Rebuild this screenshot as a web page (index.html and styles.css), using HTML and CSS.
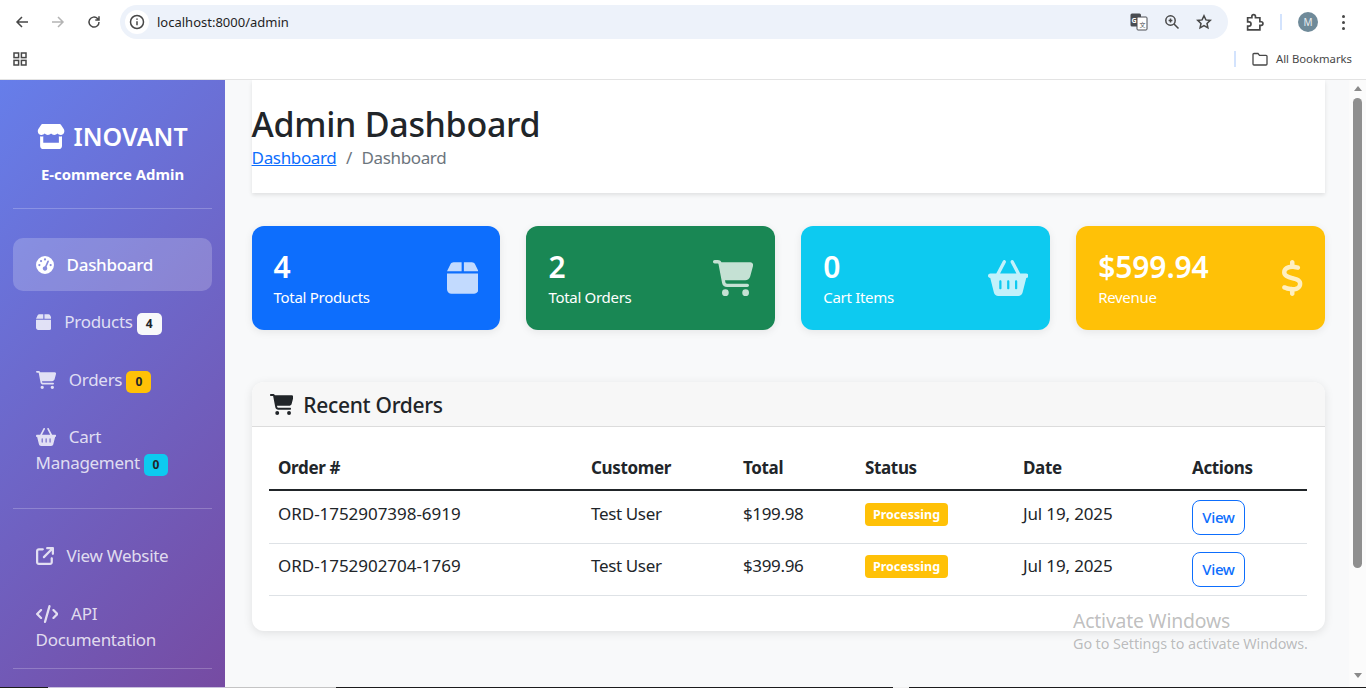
FILE: index.html
```html
<!DOCTYPE html>
<html lang="en">
<head>
    <meta charset="UTF-8">
    <meta name="viewport" content="width=device-width, initial-scale=1.0">
    <title>Admin Dashboard</title>
    <link rel="stylesheet" href="styles.css">
</head>
<body>
    <svg class="sprite" xmlns="http://www.w3.org/2000/svg">
        <symbol id="i-store" viewBox="0 0 576 512"><path d="M547.6 103.8L490.3 13.1C485.2 5 476.1 0 466.4 0H109.6C99.9 0 90.8 5 85.7 13.1L28.3 103.8c-29.6 46.8-3.4 111.9 51.9 119.4c4 .5 8.1 .8 12.1 .8c26.1 0 49.3-11.4 65.2-29c15.9 17.6 39.1 29 65.2 29c26.1 0 49.3-11.4 65.2-29c15.9 17.6 39.1 29 65.2 29c26.2 0 49.3-11.4 65.2-29c16 17.6 39.1 29 65.2 29c4.1 0 8.1-.3 12.1-.8c55.5-7.4 81.8-72.5 52.1-119.4zM499.7 254.9l-.1 0c-5.3 .7-10.7 1.1-16.2 1.1c-12.4 0-24.3-1.9-35.4-5.3V384H128V250.6c-11.2 3.5-23.2 5.4-35.6 5.4c-5.5 0-11-.4-16.3-1.1l-.1 0c-4.1-.6-8.1-1.3-12-2.3V384v64c0 35.3 28.7 64 64 64H448c35.3 0 64-28.7 64-64V384 252.6c-4 1-8 1.8-12.3 2.3z"/></symbol>
        <symbol id="i-gauge" viewBox="0 0 512 512"><path d="M0 256a256 256 0 1 1 512 0A256 256 0 1 1 0 256zM288 96a32 32 0 1 0 -64 0 32 32 0 1 0 64 0zM256 416c35.3 0 64-28.7 64-64c0-17.4-6.9-33.1-18.1-44.6L366 161.7c5.3-12.1-.2-26.3-12.3-31.6s-26.3 .2-31.6 12.3L257.9 288c-.6 0-1.3 0-1.9 0c-35.3 0-64 28.7-64 64s28.7 64 64 64zM176 144a32 32 0 1 0 -64 0 32 32 0 1 0 64 0zM96 288a32 32 0 1 0 0-64 32 32 0 1 0 0 64zm352-32a32 32 0 1 0 -64 0 32 32 0 1 0 64 0z"/></symbol>
        <symbol id="i-box" viewBox="0 0 448 512"><path d="M50.7 58.5L0 160H208V32H93.7C75.5 32 58.9 42.3 50.7 58.5zM240 160H448L397.3 58.5C389.1 42.3 372.5 32 354.3 32H240V160zm208 32H0V416c0 35.3 28.7 64 64 64H384c35.3 0 64-28.7 64-64V192z"/></symbol>
        <symbol id="i-cart" viewBox="0 0 576 512"><path d="M0 24C0 10.7 10.7 0 24 0H69.5c22 0 41.5 12.8 50.6 32h411c26.3 0 45.5 25 38.6 50.4l-41 152.3c-8.5 31.4-37 53.3-69.5 53.3H170.7l5.4 28.5c2.2 11.3 12.1 19.5 23.6 19.5H488c13.3 0 24 10.7 24 24s-10.7 24-24 24H199.7c-34.6 0-64.3-24.6-70.7-58.5L77.4 54.5c-.7-3.8-4-6.5-7.9-6.5H24C10.7 48 0 37.3 0 24zM128 464a48 48 0 1 1 96 0 48 48 0 1 1 -96 0zm336-48a48 48 0 1 1 0 96 48 48 0 1 1 0-96z"/></symbol>
        <symbol id="i-basket" viewBox="0 0 576 512"><path d="M253.3 35.1c6.1-11.8 1.5-26.3-10.2-32.4s-26.3-1.5-32.4 10.2L117.6 192H32c-17.7 0-32 14.3-32 32s14.3 32 32 32L83.9 463.5C91 492 116.6 512 146 512H430c29.4 0 55-20 62.1-48.5L544 256c17.7 0 32-14.3 32-32s-14.3-32-32-32H458.4L365.3 12.9C359.2 1.2 344.7-3.4 332.9 2.7s-16.3 20.6-10.2 32.4L404.3 192H171.7L253.3 35.1zM192 304v96c0 8.8-7.2 16-16 16s-16-7.2-16-16V304c0-8.8 7.2-16 16-16s16 7.2 16 16zm96-16c8.8 0 16 7.2 16 16v96c0 8.8-7.2 16-16 16s-16-7.2-16-16V304c0-8.8 7.2-16 16-16zm128 16v96c0 8.8-7.2 16-16 16s-16-7.2-16-16V304c0-8.8 7.2-16 16-16s16 7.2 16 16z"/></symbol>
        <symbol id="i-dollar" viewBox="0 0 320 512"><path d="M160 0c17.7 0 32 14.3 32 32V67.7c1.6 .2 3.1 .4 4.7 .7c.4 .1 .7 .1 1.1 .2l48 8.8c17.4 3.2 28.9 19.9 25.7 37.2s-19.9 28.9-37.2 25.7l-47.5-8.7c-31.3-4.6-58.9-1.5-78.3 6.2s-27.2 18.3-29 28.1c-2 10.7-.5 16.7 1.2 20.4c1.8 3.9 5.5 8.3 12.8 13.2c16.3 10.7 41.3 17.7 73.7 26.3l2.9 .8c28.6 7.6 63.6 16.8 89.6 33.8c14.2 9.3 27.6 21.9 35.9 39.5c8.5 17.9 10.3 37.9 6.4 59.2c-6.9 38-33.1 63.4-65.6 76.7c-13.7 5.6-28.6 9.2-44.4 11V480c0 17.7-14.3 32-32 32s-32-14.3-32-32V445.1c-.4-.1-.9-.1-1.3-.2l-.2 0 0 0c-24.4-3.8-64.5-14.3-91.5-26.3c-16.1-7.2-23.4-26.1-16.2-42.2s26.1-23.4 42.2-16.2c20.9 9.3 55.3 18.5 75.2 21.6c31.9 4.7 58.2 2 76-5.3c16.9-6.9 24.6-16.9 26.8-28.9c1.9-10.6 .4-16.7-1.3-20.4c-1.9-4-5.6-8.4-13-13.3c-16.4-10.7-41.5-17.7-74-26.3l-2.8-.7 0 0C119.4 279.3 84.4 270 58.4 253c-14.2-9.3-27.5-22-35.8-39.6c-8.4-17.9-10.1-37.9-6.1-59.2C23.7 116 52.3 91.2 84.8 78.3c13.3-5.3 27.9-8.9 43.2-11V32c0-17.7 14.3-32 32-32z"/></symbol>
        <symbol id="i-external" viewBox="0 0 512 512"><path d="M320 0c-17.7 0-32 14.3-32 32s14.3 32 32 32h82.7L201.4 265.4c-12.5 12.5-12.5 32.8 0 45.3s32.8 12.5 45.3 0L448 109.3V192c0 17.7 14.3 32 32 32s32-14.3 32-32V32c0-17.7-14.3-32-32-32H320zM80 32C35.8 32 0 67.8 0 112V432c0 44.2 35.8 80 80 80H400c44.2 0 80-35.8 80-80V320c0-17.7-14.3-32-32-32s-32 14.3-32 32V432c0 8.8-7.2 16-16 16H80c-8.8 0-16-7.2-16-16V112c0-8.8 7.2-16 16-16H192c17.7 0 32-14.3 32-32s-14.3-32-32-32H80z"/></symbol>
        <symbol id="i-code" viewBox="0 0 640 512"><path d="M392.8 1.2c-17-4.9-34.7 5-39.6 22l-128 448c-4.9 17 5 34.7 22 39.6s34.7-5 39.6-22l128-448c4.9-17-5-34.7-22-39.6zm80.6 120.1c-12.5 12.5-12.5 32.8 0 45.3L562.7 256l-89.4 89.4c-12.5 12.5-12.5 32.8 0 45.3s32.8 12.5 45.3 0l112-112c12.5-12.5 12.5-32.8 0-45.3l-112-112c-12.5-12.5-32.8-12.5-45.3 0zm-306.7 0c-12.5-12.5-32.8-12.5-45.3 0l-112 112c-12.5 12.5-12.5 32.8 0 45.3l112 112c12.5 12.5 32.8 12.5 45.3 0s12.5-32.8 0-45.3L77.3 256l89.4-89.4c12.5-12.5 12.5-32.8 0-45.3z"/></symbol>
    </svg>

    <div class="browser-top">
        <div class="toolbar">
            <button class="tool-btn">
                <svg viewBox="0 0 16 16" class="tool-icon"><path d="M14 8H3M8 3L3 8l5 5"/></svg>
            </button>
            <button class="tool-btn tool-btn-off">
                <svg viewBox="0 0 16 16" class="tool-icon"><path d="M2 8h11M8 3l5 5-5 5"/></svg>
            </button>
            <button class="tool-btn">
                <svg viewBox="0 0 16 16" class="tool-icon"><path d="M13 8a5 5 0 1 1-1.5-3.5L13 6M13 2.2V6H9.3"/></svg>
            </button>
            <div class="address-bar">
                <span class="site-info">
                    <svg viewBox="0 0 16 16" class="tool-icon"><circle cx="8" cy="8" r="6.5"/><path d="M8 7.2v4M8 4.6v1.2"/></svg>
                </span>
                <span class="address-text">localhost:8000/admin</span>
                <span class="address-actions">
                    <svg viewBox="0 0 18 18" class="translate-icon">
                        <rect x="0.5" y="0.5" width="10.5" height="13" rx="1.5" fill="#4a4d52"/>
                        <rect x="7" y="4" width="10" height="13" rx="1" fill="#fff" stroke="#4a4d52"/>
                        <text x="1.5" y="9.5" class="translate-g">G</text>
                        <text x="9.4" y="13.5" class="translate-x">文</text>
                    </svg>
                    <svg viewBox="0 0 16 16" class="tool-icon"><circle cx="6.5" cy="6.5" r="4.7"/><path d="M10 10l4.5 4.5M4.6 6.5h3.8M6.5 4.6v3.8"/></svg>
                    <svg viewBox="0 0 16 16" class="tool-icon"><path d="M8 1.8l1.9 4.1 4.4.5-3.3 3 .9 4.4L8 11.6l-3.9 2.2.9-4.4-3.3-3 4.4-.5z"/></svg>
                </span>
            </div>
            <button class="tool-btn tool-btn-ext">
                <svg viewBox="0 0 18 18" class="ext-icon"><path d="M2.5 4.5h4V3.2a1.7 1.7 0 0 1 3.4 0v1.3h4.2v3.8h1.2a1.7 1.7 0 0 1 0 3.4h-1.2v4.3H2.5v-3.6h1.2a2 2 0 0 0 0-4H2.500z"/></svg>
            </button>
            <span class="toolbar-sep"></span>
            <span class="avatar">M</span>
            <span class="kebab"><i></i><i></i><i></i></span>
        </div>
        <div class="bookmarks">
            <svg viewBox="0 0 14 14" class="apps-icon">
                <rect x="1" y="1" width="4.6" height="4.6"/><rect x="8.4" y="1" width="4.6" height="4.6"/>
                <rect x="1" y="8.4" width="4.6" height="4.6"/><rect x="8.4" y="8.4" width="4.6" height="4.6"/>
            </svg>
            <span class="bookmarks-right">
                <span class="bookmarks-sep"></span>
                <svg viewBox="0 0 16 14" class="folder-icon"><path d="M1 2.5a1 1 0 0 1 1-1h4l1.500 1.800H14a1 1 0 0 1 1 1V12a1 1 0 0 1-1 1H2a1 1 0 0 1-1-1z"/></svg>
                <span class="bookmarks-label">All Bookmarks</span>
            </span>
        </div>
    </div>

    <div class="viewport">
        <aside class="sidebar">
            <div class="brand">
                <h3 class="brand-name"><svg class="icon" viewBox="0 0 576 512"><use href="#i-store"/></svg>INOVANT</h3>
                <div class="brand-sub">E-commerce Admin</div>
            </div>
            <hr class="side-line side-line-top">
            <ul class="side-nav">
                <li><a class="side-link active" href="#"><svg class="icon" viewBox="0 0 512 512"><use href="#i-gauge"/></svg>Dashboard</a></li>
                <li><a class="side-link" href="#"><svg class="icon" viewBox="0 0 448 512"><use href="#i-box"/></svg>Products <span class="count count-light">4</span></a></li>
                <li><a class="side-link" href="#"><svg class="icon" viewBox="0 0 576 512"><use href="#i-cart"/></svg>Orders <span class="count count-warn">0</span></a></li>
                <li><a class="side-link" href="#"><svg class="icon" viewBox="0 0 576 512"><use href="#i-basket"/></svg>Cart Management <span class="count count-info">0</span></a></li>
            </ul>
            <hr class="side-line side-line-mid">
            <ul class="side-nav">
                <li><a class="side-link" href="#"><svg class="icon" viewBox="0 0 512 512"><use href="#i-external"/></svg>View Website</a></li>
                <li><a class="side-link" href="#"><svg class="icon" viewBox="0 0 640 512"><use href="#i-code"/></svg>API Documentation</a></li>
            </ul>
            <hr class="side-line side-line-end">
        </aside>

        <main class="main">
            <header class="page-header">
                <h1>Admin Dashboard</h1>
                <nav class="crumbs"><a href="#">Dashboard</a><span class="crumb-sep">/</span><span class="crumb-now">Dashboard</span></nav>
            </header>

            <section class="stats">
                <div class="stat stat-blue">
                    <div class="stat-text"><div class="stat-num">4</div><div class="stat-label">Total Products</div></div>
                    <svg class="stat-icon" viewBox="0 0 448 512"><use href="#i-box"/></svg>
                </div>
                <div class="stat stat-green">
                    <div class="stat-text"><div class="stat-num">2</div><div class="stat-label">Total Orders</div></div>
                    <svg class="stat-icon" viewBox="0 0 576 512"><use href="#i-cart"/></svg>
                </div>
                <div class="stat stat-cyan">
                    <div class="stat-text"><div class="stat-num">0</div><div class="stat-label">Cart Items</div></div>
                    <svg class="stat-icon" viewBox="0 0 576 512"><use href="#i-basket"/></svg>
                </div>
                <div class="stat stat-yellow">
                    <div class="stat-text"><div class="stat-num">$599.94</div><div class="stat-label">Revenue</div></div>
                    <svg class="stat-icon" viewBox="0 0 320 512"><use href="#i-dollar"/></svg>
                </div>
            </section>

            <section class="card">
                <div class="card-head">
                    <svg class="card-icon" viewBox="0 0 576 512"><use href="#i-cart"/></svg>
                    <h5>Recent Orders</h5>
                </div>
                <div class="card-body">
                    <table class="orders">
                        <thead>
                            <tr>
                                <th class="col-id">Order #</th>
                                <th class="col-customer">Customer</th>
                                <th class="col-total">Total</th>
                                <th class="col-status">Status</th>
                                <th class="col-date">Date</th>
                                <th>Actions</th>
                            </tr>
                        </thead>
                        <tbody>
                            <tr>
                                <td class="order-id">ORD-1752907398-6919</td>
                                <td>Test User</td>
                                <td>$199.98</td>
                                <td><span class="status">Processing</span></td>
                                <td class="order-date">Jul 19, 2025</td>
                                <td><a class="view-btn" href="#">View</a></td>
                            </tr>
                            <tr>
                                <td class="order-id">ORD-1752902704-1769</td>
                                <td>Test User</td>
                                <td>$399.96</td>
                                <td><span class="status">Processing</span></td>
                                <td class="order-date">Jul 19, 2025</td>
                                <td><a class="view-btn" href="#">View</a></td>
                            </tr>
                        </tbody>
                    </table>
                </div>
            </section>
        </main>

        <div class="scrollbar">
            <span class="arrow-up"></span>
            <span class="thumb"></span>
            <span class="arrow-down"></span>
        </div>

        <div class="watermark">
            <div class="watermark-title">Activate Windows</div>
            <div class="watermark-sub">Go to Settings to activate Windows.</div>
        </div>
    </div>

    <div class="taskbar-edge">
        <span class="edge-dark edge-a"></span>
        <span class="edge-lilac"></span>
        <span class="edge-grey"></span>
        <span class="edge-dark edge-b"></span>
        <span class="edge-white"></span>
        <span class="edge-dark edge-c"></span>
    </div>
</body>
</html>
```

FILE: styles.css
```css
* {
    box-sizing: border-box;
}

html, body {
    height: 100%;
}

body {
    margin: 0;
    display: flex;
    flex-direction: column;
    overflow: hidden;
    font-family: "Noto Sans", "Open Sans", sans-serif;
    color: #212529;
    background-color: #f8f9fa;
}

.sprite {
    display: none;
}

/* browser toolbar */
.browser-top {
    height: 80px;
    flex: none;
    background-color: #fff;
    border-bottom: 1px solid #e3e3e3;
}

.toolbar {
    height: 44px;
    display: flex;
    align-items: center;
    padding-left: 4px;
}

.tool-btn {
    width: 36px;
    height: 34px;
    display: flex;
    align-items: center;
    justify-content: center;
    background: none;
    border: none;
    padding: 0;
    color: #474747;
}

.tool-btn-off {
    color: #b4b4b4;
}

.tool-btn-ext {
    margin-left: 8px;
}

.tool-icon {
    width: 16px;
    height: 16px;
    fill: none;
    stroke: currentColor;
    stroke-width: 1.5;
}

.ext-icon {
    width: 19px;
    height: 19px;
    fill: none;
    stroke: currentColor;
    stroke-width: 1.6;
}

.address-bar {
    width: 1108px;
    height: 34px;
    margin-left: 8px;
    display: flex;
    align-items: center;
    padding-left: 5px;
    border-radius: 17px;
    background-color: #edf2fa;
    color: #474747;
}

.site-info {
    width: 24px;
    height: 24px;
    display: flex;
    align-items: center;
    justify-content: center;
    border-radius: 50%;
    background-color: #fff;
}

.address-text {
    margin-left: 8px;
    font-size: 13px;
    color: #1f1f1f;
}

.address-actions {
    margin-left: auto;
    padding-right: 16px;
    display: flex;
    align-items: center;
    gap: 16px;
}

.translate-icon {
    width: 18px;
    height: 18px;
}

.translate-g {
    font-size: 7px;
    font-weight: 700;
    fill: #fff;
}

.translate-x {
    font-family: "Noto Sans CJK SC", sans-serif;
    font-size: 6px;
    fill: #4a4d52;
}

.toolbar-sep {
    width: 2px;
    height: 16px;
    margin-left: 8px;
    background-color: #d3e3fd;
}

.avatar {
    width: 20px;
    height: 20px;
    margin-left: 16px;
    display: flex;
    align-items: center;
    justify-content: center;
    border-radius: 50%;
    background-color: #6f8a99;
    color: #e8eef2;
    font-size: 10px;
}

.kebab {
    margin-left: 24px;
    display: flex;
    flex-direction: column;
    gap: 3px;
}

.kebab i {
    width: 3px;
    height: 3px;
    border-radius: 50%;
    background-color: #474747;
}

.bookmarks {
    height: 30px;
    display: flex;
    align-items: center;
    padding-left: 13px;
}

.apps-icon {
    width: 14px;
    height: 14px;
    fill: none;
    stroke: #474747;
    stroke-width: 1.5;
}

.bookmarks-right {
    margin-left: auto;
    display: flex;
    align-items: center;
    padding-right: 14px;
}

.bookmarks-sep {
    width: 2px;
    height: 16px;
    background-color: #d3e3fd;
}

.folder-icon {
    width: 16px;
    height: 14px;
    margin-left: 16px;
    fill: none;
    stroke: #474747;
    stroke-width: 1.3;
}

.bookmarks-label {
    margin-left: 8px;
    margin-top: -2px;
    font-size: 11.3px;
    color: #474747;
}

/* page area */
.viewport {
    position: relative;
    flex: 1;
    min-height: 0;
    display: flex;
    overflow: hidden;
}

.sidebar {
    width: 225px;
    flex: none;
    padding: 0 13px;
    background: linear-gradient(135deg, #667eea 0%, #764ba2 100%);
}

.brand {
    padding-top: 39px;
    text-align: center;
    color: #fff;
}

.brand-name {
    margin: 0;
    font-size: 25px;
    line-height: 34px;
    font-weight: 600;
}

.icon {
    height: 18px;
    width: auto;
    fill: currentColor;
    margin-right: 13px;
    vertical-align: -3px;
}

.brand-name .icon {
    height: 25px;
    margin-right: 8px;
    vertical-align: -3px;
}

.brand-sub {
    margin-top: 11px;
    font-size: 14.9px;
    line-height: 20px;
    font-weight: 700;
}

.side-line {
    margin: 0;
    border: none;
    border-top: 1px solid rgba(255, 255, 255, 0.22);
}

.side-line-top {
    margin-top: 24px;
}

.side-line-mid {
    margin-top: 18px;
}

.side-line-end {
    margin-top: 2px;
}

.side-nav {
    list-style-type: none;
    margin: 29px 0 0;
    padding: 0;
}

.side-nav + .side-line + .side-nav {
    margin-top: 21px;
}

.side-nav li {
    margin-bottom: 4.5px;
}

.side-nav li:last-child {
    margin-bottom: 0;
}

.side-link {
    display: block;
    padding: 13.5px 22.6px;
    border-radius: 10px;
    font-size: 17px;
    line-height: 26px;
    letter-spacing: -0.3px;
    color: rgba(255, 255, 255, 0.8);
    text-decoration: none;
}

.side-link.active {
    color: #fff;
    font-weight: 500;
    background-color: rgba(255, 255, 255, 0.2);
}

.count {
    display: inline-block;
    min-width: 25px;
    height: 22px;
    border-radius: 5px;
    font-size: 12px;
    line-height: 22px;
    font-weight: 700;
    letter-spacing: 0;
    text-align: center;
    color: #212529;
}

.count-light {
    background-color: #f8f9fa;
}

.count-warn {
    background-color: #ffc107;
}

.count-info {
    min-width: 24px;
    background-color: #0dcaf0;
}

.main {
    flex: 1;
    min-width: 0;
    padding: 0 24px 0 26.6px;
}

.page-header {
    height: 113px;
    padding-top: 22px;
    background-color: #fff;
    box-shadow: 0 2px 4px rgba(0, 0, 0, 0.1);
}

.page-header h1 {
    margin: 0;
    font-size: 34px;
    line-height: 44px;
    font-weight: 500;
    letter-spacing: -0.3px;
}

.crumbs {
    font-size: 17px;
    line-height: 24px;
    letter-spacing: -0.35px;
}

.crumbs a {
    color: #0d6efd;
}

.crumb-sep {
    margin: 0 9.5px;
    color: #6c757d;
}

.crumb-now {
    color: #6c757d;
}

.stats {
    margin-top: 33px;
    display: grid;
    grid-template-columns: repeat(4, 1fr);
    gap: 26px;
}

.stat {
    height: 104px;
    padding: 0 22px;
    display: flex;
    align-items: center;
    justify-content: space-between;
    border-radius: 12px;
    color: #fff;
    box-shadow: 0 2px 8px rgba(0, 0, 0, 0.08);
}

.stat-blue {
    background-color: #0d6efd;
}

.stat-green {
    background-color: #198754;
}

.stat-cyan {
    background-color: #0dcaf0;
}

.stat-yellow {
    background-color: #ffc107;
}

.stat-text {
    padding-bottom: 2px;
}

.stat-num {
    font-size: 30px;
    line-height: 40px;
    font-weight: 600;
    letter-spacing: -0.1px;
}

.stat-label {
    margin-top: -1px;
    font-size: 15px;
    line-height: 22px;
    letter-spacing: -0.3px;
}

.stat-icon {
    height: 36px;
    width: auto;
    fill: currentColor;
    opacity: 0.75;
}

.card {
    margin-top: 52px;
    height: 249px;
    background-color: #fff;
    border-radius: 12px;
    box-shadow: 0 2px 10px rgba(0, 0, 0, 0.1);
    overflow: hidden;
}

.card-head {
    height: 45px;
    display: flex;
    align-items: center;
    padding-left: 18px;
    background-color: #f7f7f7;
    border-bottom: 1px solid #dcdcdc;
}

.card-icon {
    height: 21px;
    width: auto;
    margin-right: 10px;
    fill: #212529;
}

.card-head h5 {
    margin: 2px 0 0;
    font-size: 21px;
    font-weight: 500;
    letter-spacing: -0.3px;
}

.card-body {
    padding: 18px 18px 0 17.4px;
}

.orders {
    width: 100%;
    border-collapse: collapse;
    table-layout: fixed;
    font-size: 17px;
    line-height: 26px;
    letter-spacing: -0.35px;
}

.orders th {
    height: 45px;
    padding: 2px 9px 0;
    text-align: left;
    font-weight: 700;
    border-bottom: 2px solid #212529;
}

.orders td {
    padding: 9px 9px 8px;
    vertical-align: top;
    border-bottom: 1px solid #dee2e6;
}

.orders tbody tr:first-child td {
    padding-top: 10px;
}

.orders .order-id {
    letter-spacing: -0.04px;
}

.orders .order-date {
    letter-spacing: -0.15px;
}

.col-id {
    width: 313px;
}

.col-customer {
    width: 152px;
}

.col-total {
    width: 122px;
}

.col-status {
    width: 158px;
}

.col-date {
    width: 169px;
}

.status {
    display: inline-block;
    width: 83px;
    height: 23px;
    margin-top: 2px;
    border-radius: 4px;
    background-color: #ffc107;
    color: #fff;
    font-size: 12.5px;
    line-height: 23px;
    font-weight: 700;
    letter-spacing: 0;
    text-align: center;
    vertical-align: top;
}

.view-btn {
    display: block;
    width: 53px;
    height: 35px;
    margin-top: -1px;
    border: 1px solid #0d6efd;
    border-radius: 8px;
    color: #0d6efd;
    font-size: 15px;
    line-height: 33px;
    font-weight: 500;
    text-align: center;
    text-decoration: none;
}

/* fake scrollbar */
.scrollbar {
    width: 17px;
    flex: none;
    display: flex;
    flex-direction: column;
    align-items: center;
    background-color: #fbfbfb;
}

.arrow-up {
    margin-top: 6px;
    border-left: 4px solid transparent;
    border-right: 4px solid transparent;
    border-bottom: 5px solid #8a8a8a;
}

.thumb {
    width: 9px;
    height: 470px;
    margin-top: 7px;
    border-radius: 5px;
    background-color: #8f8f8f;
}

.arrow-down {
    margin-top: 105px;
    border-left: 4px solid transparent;
    border-right: 4px solid transparent;
    border-top: 5px solid #8a8a8a;
}

/* windows watermark sits over the page */
.watermark {
    position: absolute;
    left: 1073px;
    top: 528px;
    color: rgba(90, 90, 90, 0.4);
    pointer-events: none;
}

.watermark-title {
    font-size: 19.4px;
    line-height: 26px;
    letter-spacing: -0.2px;
}

.watermark-sub {
    font-size: 14.4px;
    line-height: 20px;
    letter-spacing: -0.1px;
}

.taskbar-edge {
    height: 1px;
    flex: none;
    display: flex;
}

.edge-dark {
    background-color: #1c1c1c;
}

.edge-a {
    width: 48px;
}

.edge-lilac {
    width: 177px;
    background-color: #c9c0dd;
}

.edge-grey {
    width: 111px;
    background-color: #c4c4c4;
}

.edge-b {
    width: 557px;
}

.edge-white {
    width: 16px;
    background-color: #f0f0f0;
}

.edge-c {
    flex: 1;
}
```
